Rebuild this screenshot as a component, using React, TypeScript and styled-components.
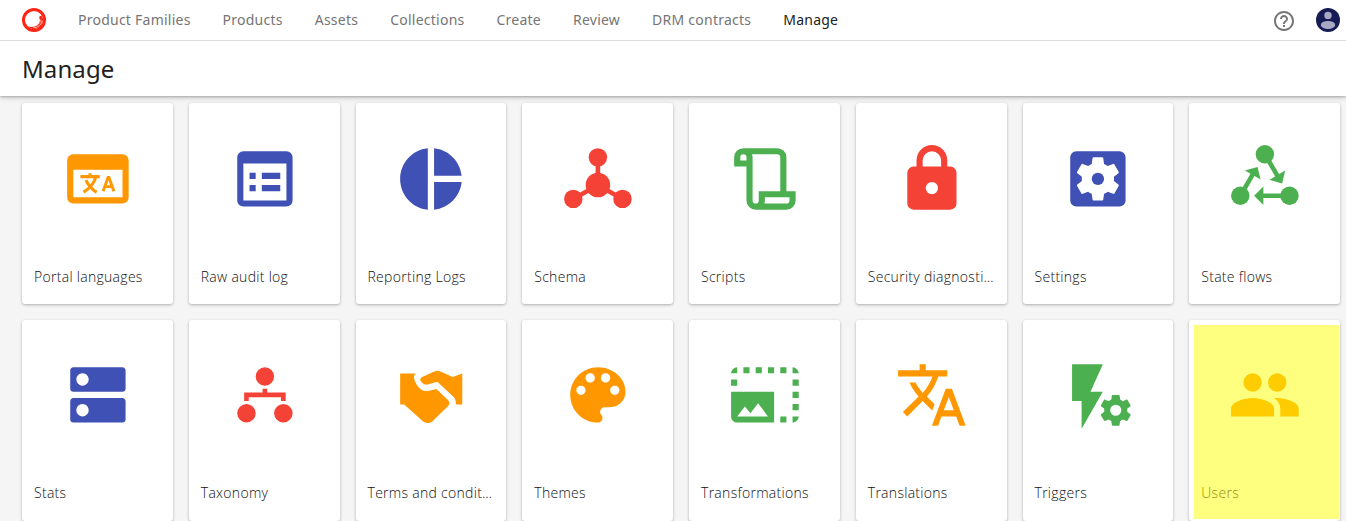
import React from 'react';
import styled, { createGlobalStyle } from 'styled-components';

const GlobalStyle = createGlobalStyle`
  *, *::before, *::after { box-sizing: border-box; }
  body {
    margin: 0;
    background: #f5f5f5;
    color: #212121;
    font-family: 'Open Sans', 'Noto Sans', sans-serif;
    overflow: hidden;
  }
`;

const Page = styled.div`
  height: 521px;
  overflow: hidden;
`;

const Header = styled.header`
  position: relative;
  background: #fff;
  box-shadow: 0 1px 2px rgba(0, 0, 0, 0.2), 0 1px 6px rgba(0, 0, 0, 0.22);
`;

const TopBar = styled.div`
  display: flex;
  align-items: center;
  height: 41px;
  padding: 0 6px 0 22px;
  border-bottom: 1px solid #dcdcdc;
`;

const Nav = styled.nav`
  display: flex;
  flex: 1;
  gap: 32px;
  margin-left: 32px;
`;

const NavLink = styled.a<{ $active?: boolean }>`
  font: 400 14px/20px 'Noto Sans', sans-serif;
  letter-spacing: 0.24px;
  white-space: nowrap;
  color: ${({ $active }) => ($active ? '#212121' : '#757575')};
`;

const Actions = styled.div`
  display: flex;
  align-items: center;
  gap: 20px;
`;

const TitleBar = styled.div`
  display: flex;
  align-items: center;
  height: 55px;
  padding: 0 22px;
`;

const Title = styled.h1`
  margin: 0;
  font: 400 24px/32px 'Noto Sans', sans-serif;
  letter-spacing: 0.1px;
`;

const Grid = styled.main`
  display: grid;
  grid-template-columns: repeat(8, 1fr);
  gap: 16px;
  padding: 7px 6px 0 22px;
`;

const Card = styled.a`
  position: relative;
  min-width: 0;
  background: #fff;
  border-radius: 3px;
  box-shadow: 0 1px 3px rgba(0, 0, 0, 0.3);
`;

const IconArea = styled.div<{ $color: string }>`
  display: flex;
  align-items: center;
  justify-content: center;
  aspect-ratio: 1;
  padding: 0.4px 0 0 0.6px;
  color: ${({ $color }) => $color};
`;

const Label = styled.div`
  height: 50px;
  padding: 12.8px 12px 0;
  font-size: 14px;
  font-weight: 300;
  line-height: 20px;
  letter-spacing: 0.29px;
  color: #111;
  white-space: nowrap;
  overflow: hidden;
  text-overflow: ellipsis;
`;

const Highlight = styled.div`
  position: absolute;
  inset: 5px 1px 1.3px 5px;
  background: rgba(255, 255, 0, 0.5);
`;

const blue = '#3f51b5';
const orange = '#ff9800';
const red = '#f44336';
const green = '#4caf50';

const gear =
  'M19.43 12.98c.04-.32.07-.64.07-.98s-.03-.66-.07-.98l2.11-1.65c.19-.15.24-.42.12-.64l-2-3.46c-.12-.22-.39-.3-.61-.22l-2.49 1c-.52-.4-1.08-.73-1.69-.98l-.38-2.65C14.46 2.18 14.25 2 14 2h-4c-.25 0-.46.18-.49.42l-.38 2.65c-.61.25-1.17.59-1.69.98l-2.49-1c-.23-.09-.49 0-.61.22l-2 3.46c-.13.22-.07.49.12.64l2.11 1.65c-.04.32-.07.65-.07.98s.03.66.07.98l-2.11 1.65c-.19.15-.24.42-.12.64l2 3.46c.12.22.39.3.61.22l2.49-1c.52.4 1.08.73 1.69.98l.38 2.65c.03.24.24.42.49.42h4c.25 0 .46-.18.49-.42l.38-2.65c.61-.25 1.17-.59 1.69-.98l2.49 1c.23.09.49 0 .61-.22l2-3.46c.12-.22.07-.49-.12-.64l-2.11-1.65z';

interface Tile {
  label: string;
  color: string;
  icon: React.ReactNode;
  highlighted?: boolean;
}

const tiles: Tile[] = [
  {
    label: 'Portal languages',
    color: orange,
    icon: (
      <>
        <path fillRule="evenodd" d="M4 4h16a2 2 0 0 1 2 2v12a2 2 0 0 1-2 2H4a2 2 0 0 1-2-2V6a2 2 0 0 1 2-2zM4 9v9h16V9z" />
        <path fill="none" stroke="currentColor" strokeWidth="1" d="M6.3 11.25h6.3M9.45 10.2v1M11.3 11.5c-.6 2-1.9 3.6-4 4.8M8.1 12.4c.8 1.7 1.9 3 3.5 4" />
        <path fill="none" stroke="currentColor" strokeWidth=".95" d="M13.7 16l1.6-4.5h.3l1.6 4.5M14.2 14.5h2.5" />
      </>
    ),
  },
  {
    label: 'Raw audit log',
    color: blue,
    icon: <path fillRule="evenodd" d="M5 3h14a2 2 0 0 1 2 2v14a2 2 0 0 1-2 2H5a2 2 0 0 1-2-2V5a2 2 0 0 1 2-2zM5 7v12h14V7zM7 10h2v2H7zM11 10h6v2h-6zM7 14h2v2H7zM11 14h6v2h-6z" />,
  },
  {
    label: 'Reporting Logs',
    color: blue,
    icon: <path d="M11 2v20c-5.07-.5-9-4.79-9-10s3.93-9.5 9-10zm2.03 0v8.99H22c-.47-4.74-4.24-8.52-8.97-8.99zm0 11.01V22c4.74-.47 8.5-4.25 8.97-8.99h-8.97z" />,
  },
  {
    label: 'Schema',
    color: red,
    icon: (
      <>
        <circle cx="12" cy="5" r="3" />
        <circle cx="12" cy="14" r="4" />
        <circle cx="4" cy="18.5" r="3" />
        <circle cx="20" cy="18.5" r="3" />
        <path fill="none" stroke="currentColor" strokeWidth="1.5" d="M12 5v9M4 18.5l8-4.5 8 4.5" />
      </>
    ),
  },
  {
    label: 'Scripts',
    color: green,
    icon: <path fillRule="evenodd" d="M5 2h11a3 3 0 0 1 3 3v11h3v3a3 3 0 0 1-3 3H9a3 3 0 0 1-3-3V8H2V5a3 3 0 0 1 3-3zM8 5v14a1 1 0 0 0 2 0v-3h7V5a1 1 0 0 0-1-1H7.8A3 3 0 0 1 8 5zM4 6V5a1 1 0 0 1 2 0v1zM12 18h8v1a1 1 0 0 1-1 1h-7.2a3 3 0 0 0 .2-1z" />,
  },
  {
    label: 'Security diagnostics',
    color: red,
    icon: <path d="M12 17a2 2 0 0 0 2-2 2 2 0 0 0-2-2 2 2 0 0 0-2 2 2 2 0 0 0 2 2m6-9a2 2 0 0 1 2 2v10a2 2 0 0 1-2 2H6a2 2 0 0 1-2-2V10a2 2 0 0 1 2-2h1V6a5 5 0 0 1 5-5 5 5 0 0 1 5 5v2h1m-6-5a3 3 0 0 0-3 3v2h6V6a3 3 0 0 0-3-3z" />,
  },
  {
    label: 'Settings',
    color: blue,
    icon: (
      <>
        <rect x="3" y="3" width="18" height="18" rx="2" />
        <path fill="#fff" d={gear} transform="translate(3.6 3.6) scale(.7)" />
        <circle cx="12" cy="12" r="2" />
      </>
    ),
  },
  {
    label: 'State flows',
    color: green,
    icon: (
      <>
        <circle cx="12" cy="4" r="3" />
        <circle cx="4" cy="17.5" r="3" />
        <circle cx="20" cy="17.5" r="3" />
        <path d="M8.5 17.5l3-3v6zM17.6 13.5l-4.1-1.2 5.1-3zM9.6 8.1l-4.1 1.2 5.1 2.9z" />
        <path fill="none" stroke="currentColor" strokeWidth="1.5" d="M20 17.5h-9M12 4l4.2 7.2M4 17.5l4.2-7.2" />
      </>
    ),
  },
  {
    label: 'Stats',
    color: blue,
    icon: <path d="M20 13H4c-.55 0-1 .45-1 1v6c0 .55.45 1 1 1h16c.55 0 1-.45 1-1v-6c0-.55-.45-1-1-1zM7 19c-1.1 0-2-.9-2-2s.9-2 2-2 2 .9 2 2-.9 2-2 2zM20 3H4c-.55 0-1 .45-1 1v6c0 .55.45 1 1 1h16c.55 0 1-.45 1-1V4c0-.55-.45-1-1-1zM7 9c-1.1 0-2-.9-2-2s.9-2 2-2 2 .9 2 2-.9 2-2 2z" />,
  },
  {
    label: 'Taxonomy',
    color: red,
    icon: (
      <>
        <circle cx="12" cy="6" r="3" />
        <circle cx="6" cy="18" r="3" />
        <circle cx="18" cy="18" r="3" />
        <path d="M11.25 10h1.5v1.25h6V14h-1.5v-1.25H6.75V14h-1.5v-2.75h6z" />
      </>
    ),
  },
  {
    label: 'Terms and conditions',
    color: orange,
    icon: (
      <>
        <path d="M2 5.05h5.1c-.5.4-.7 1-.55 1.6.2 1.1 1 2.6 2.1 3.4.9.7 1.8.8 2.8.6l2.35-.6 3.8 3.7c.6.6.5 1.3 0 1.9l-5 4.8c-.9.9-2.2.9-3.2.1L3.3 15.1H2z" />
        <path d="M8.5 7c.1-.4.3-.6.7-.8l3.9-1.8c.7-.35 1.4-.35 2 0l4 1.75 3.1-1.1V15.1h-2.1c.1-.9-.1-1.7-.6-2.3l-5.4-5.1-3.2.95c-1.1.2-2.1-.7-2.4-1.65z" />
      </>
    ),
  },
  {
    label: 'Themes',
    color: orange,
    icon: <path d="M12 3c-4.97 0-9 4.03-9 9s4.03 9 9 9c.83 0 1.5-.67 1.5-1.5 0-.39-.15-.74-.39-1.01-.23-.26-.38-.61-.38-.99 0-.83.67-1.5 1.5-1.5H16c2.76 0 5-2.24 5-5 0-4.42-4.03-8-9-8zm-5.5 9c-.83 0-1.5-.67-1.5-1.5S5.67 9 6.5 9 8 9.67 8 10.5 7.33 12 6.5 12zm3-4C8.67 8 8 7.33 8 6.5S8.67 5 9.5 5s1.5.67 1.5 1.5S10.33 8 9.5 8zm5 0c-.83 0-1.5-.67-1.5-1.5S13.67 5 14.5 5s1.5.67 1.5 1.5S15.33 8 14.5 8zm3 4c-.83 0-1.5-.67-1.5-1.5S16.67 9 17.5 9s1.5.67 1.5 1.5-.67 1.5-1.5 1.5z" />,
  },
  {
    label: 'Transformations',
    color: green,
    icon: <path d="M21 15h2v2h-2v-2zm0-4h2v2h-2v-2zm2 8h-2v2c1 0 2-1 2-2zM13 3h2v2h-2V3zm8 4h2v2h-2V7zm0-4v2h2c0-1-1-2-2-2zM1 7h2v2H1V7zm16-4h2v2h-2V3zm0 16h2v2h-2v-2zM3 3C2 3 1 4 1 5h2V3zm6 0h2v2H9V3zM5 3h2v2H5V3zm-4 8v8c0 1.1.9 2 2 2h12V11H1zm2 8l2.5-3.21 1.79 2.15 2.5-3.22L13 19H3z" />,
  },
  {
    label: 'Translations',
    color: orange,
    icon: <path d="M12.87 15.07l-2.54-2.51.03-.03c1.74-1.94 2.98-4.17 3.71-6.53H17V4h-7V2H8v2H1v1.99h11.17C11.5 7.92 10.44 9.75 9 11.35 8.07 10.32 7.3 9.19 6.69 8h-2c.73 1.63 1.73 3.17 2.98 4.56l-5.09 5.02L4 19l5-5 3.11 3.11.76-2.04zM18.5 10h-2L12 22h2l1.12-3h4.75L21 22h2l-4.5-12zm-2.62 7l1.62-4.33L19.12 17h-3.24z" />,
  },
  {
    label: 'Triggers',
    color: green,
    icon: (
      <>
        <path d="M3.6 2h10l-4 9h4L6.7 23v-9H3.6z" />
        <path fillRule="evenodd" d={gear + 'M12 8.4a3.6 3.6 0 1 0 0 7.2 3.6 3.6 0 0 0 0-7.2z'} transform="translate(11.8 11) scale(.5)" />
      </>
    ),
  },
  {
    label: 'Users',
    color: orange,
    highlighted: true,
    icon: <path d="M16 13c-.29 0-.62 0-.97.05C16.19 13.89 17 15 17 16.5V19h6v-2.5c0-2.33-4.67-3.5-7-3.5M8 13c-2.33 0-7 1.17-7 3.5V19h14v-2.5C15 14.17 10.33 13 8 13m0-2a3 3 0 1 0 0-6 3 3 0 0 0 0 6m8 0a3 3 0 1 0 0-6 3 3 0 0 0 0 6z" />,
  },
];

const links = ['Product Families', 'Products', 'Assets', 'Collections', 'Create', 'Review', 'DRM contracts', 'Manage'];

const Logo = () => (
  <svg width="24" height="24" viewBox="0 0 24 24">
    <circle cx="12" cy="12" r="10.5" fill="#fff" stroke="#ff2414" strokeWidth="3" />
    <path d="M19.5 7.5L21.5 12l-3 7-7 2.5-6-3c6 1.5 12-1 12.500-6.500-.2-1.500-1.300-2.300-.4-3.800z" fill="#ff2414" />
    <path d="M20.2 12.5c-.6 4-4 7.300-9.200 7.200" fill="none" stroke="#fff" strokeWidth=".7" />
    <path d="M18.7 11.5c-.2 3.600-3 6.500-8.500 6.700" fill="none" stroke="#fff" strokeWidth=".5" />
  </svg>
);

const HelpIcon = styled.svg`
  margin-top: 1px;
`;

const Help = () => (
  <HelpIcon width="24" height="24" viewBox="0 0 24 24" fill="#757575">
    <path d="M11 18h2v-2h-2v2zm1-16C6.48 2 2 6.48 2 12s4.48 10 10 10 10-4.48 10-10S17.52 2 12 2zm0 18c-4.41 0-8-3.59-8-8s3.59-8 8-8 8 3.59 8 8-3.59 8-8 8zm0-14c-2.21 0-4 1.79-4 4h2c0-1.1.9-2 2-2s2 .9 2 2c0 2-3 1.75-3 5h2c0-2.25 3-2.5 3-5 0-2.21-1.79-4-4-4z" />
  </HelpIcon>
);

const Avatar = () => (
  <svg width="24" height="24" viewBox="0 0 24 24">
    <circle cx="12" cy="12" r="12" fill="#171c54" />
    <g fill="#a8aac5">
      <circle cx="12" cy="7.4" r="3.7" />
      <ellipse cx="12" cy="16.9" rx="7.2" ry="4" />
    </g>
  </svg>
);

export default function App() {
  return (
    <Page>
      <GlobalStyle />
      <Header>
        <TopBar>
          <Logo />
          <Nav>
            {links.map((link) => (
              <NavLink key={link} $active={link === 'Manage'}>{link}</NavLink>
            ))}
          </Nav>
          <Actions>
            <Help />
            <Avatar />
          </Actions>
        </TopBar>
        <TitleBar>
          <Title>Manage</Title>
        </TitleBar>
      </Header>
      <Grid>
        {tiles.map((tile) => (
          <Card key={tile.label}>
            <IconArea $color={tile.color}>
              <svg width="73.8" height="73.8" viewBox="0 0 24 24" fill="currentColor">{tile.icon}</svg>
            </IconArea>
            <Label>{tile.label}</Label>
            {tile.highlighted && <Highlight />}
          </Card>
        ))}
      </Grid>
    </Page>
  );
}
